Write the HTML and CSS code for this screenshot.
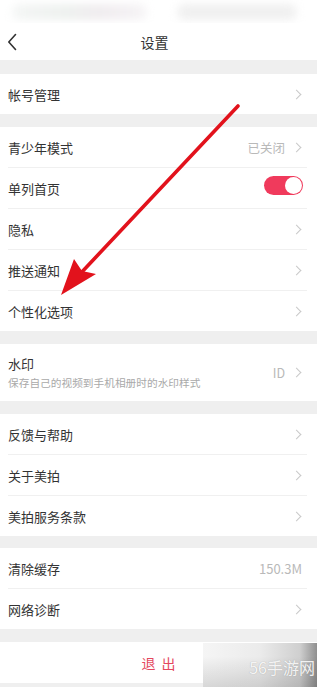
FILE: index.html
```html
<!DOCTYPE html>
<html lang="zh">
<head>
<meta charset="utf-8">
<link rel="stylesheet" href="styles.css">
</head>
<body>
<div class="page">
  <div class="status">
    <div class="blob blob-left"></div>
    <div class="blob blob-right"></div>
  </div>
  <div class="nav">
    <svg class="back" width="10" height="18" viewBox="0 0 10 18"><path d="M8.5 1.5 L1.8 9 L8.5 16.5" fill="none" stroke="#333" stroke-width="1.6" stroke-linecap="round" stroke-linejoin="round"/></svg>
    <div class="title">设置</div>
  </div>

  <div class="group">
    <div class="row"><span class="label">帐号管理</span><span class="chev"></span></div>
  </div>

  <div class="group">
    <div class="row"><span class="label">青少年模式</span><span class="value">已关闭</span><span class="chev"></span></div>
    <div class="row"><span class="label">单列首页</span><span class="toggle"><span class="knob"></span></span></div>
    <div class="row"><span class="label">隐私</span><span class="chev"></span></div>
    <div class="row"><span class="label">推送通知</span><span class="chev"></span></div>
    <div class="row"><span class="label">个性化选项</span><span class="chev"></span></div>
  </div>

  <div class="group">
    <div class="row row-tall">
      <div class="texts">
        <span class="label">水印</span>
        <span class="sub">保存自己的视频到手机相册时的水印样式</span>
      </div>
      <span class="value">ID</span><span class="chev"></span>
    </div>
  </div>

  <div class="group">
    <div class="row"><span class="label">反馈与帮助</span><span class="chev"></span></div>
    <div class="row"><span class="label">关于美拍</span><span class="chev"></span></div>
    <div class="row"><span class="label">美拍服务条款</span><span class="chev"></span></div>
  </div>

  <div class="group group-g12">
    <div class="row"><span class="label">清除缓存</span><span class="value value-end">150.3M</span></div>
    <div class="row"><span class="label">网络诊断</span><span class="chev"></span></div>
  </div>

  <div class="group">
    <div class="logout">退出</div>
  </div>

  <svg class="arrow" width="317" height="687" viewBox="0 0 317 687">
    <line x1="238" y1="106" x2="80" y2="274" stroke="#e2121c" stroke-width="3.6" stroke-linecap="round"/>
    <polygon points="61,295 74,259 82,271 96,274" fill="#e2121c"/>
  </svg>

  <div class="watermark"><span>56手游网</span></div>
</div>
</body>
</html>
```

FILE: styles.css
```css
html, body {
  margin: 0;
  padding: 0;
}
body {
  background: #efefef;
  font-family: "Noto Sans CJK SC", "Noto Sans", sans-serif;
  color: #333;
}
.page {
  position: relative;
  width: 317px;
  height: 687px;
  overflow: hidden;
  background: #efefef;
}
.status {
  height: 23px;
  background: #fff;
  display: flex;
  align-items: center;
  gap: 30px;
  padding: 0 12px;
  overflow: hidden;
}
.blob {
  height: 16px;
  border-radius: 8px;
  filter: blur(4px);
}
.blob-left {
  width: 135px;
  background: linear-gradient(to right, #f4f6f5 0%, #eef1ef 40%, #f0ecef 65%, #f6f4f6 100%);
}
.blob-right {
  width: 120px;
  background: #f0f0f0;
}
.nav {
  height: 37px;
  background: #fff;
  display: flex;
  align-items: center;
  padding-left: 7px;
  position: relative;
}
.back {
  display: block;
}
.title {
  flex: 1;
  text-align: center;
  font-size: 14px;
  margin-right: 25px;
  color: #333;
}
.group {
  background: #fff;
  margin-top: 14px;
}
.group + .group {
  margin-top: 13px;
}
.group-g12 {
  margin-top: 12px !important;
}
.row {
  height: 40px;
  margin: 0 10px 0 8px;
  padding-right: 4px;
  display: flex;
  align-items: center;
  font-size: 13px;
}
.row + .row {
  border-top: 1px solid #f0f0f0;
}
.label {
  flex: 1;
  color: #333;
  font-size: 13px;
}
.value {
  color: #b9b9b9;
  font-size: 12.5px;
  margin-right: 8px;
}
.value-end {
  margin-right: 1px;
  font-size: 13px;
}
.chev {
  width: 6px;
  height: 6px;
  border-top: 1.2px solid #c9c9c9;
  border-right: 1.2px solid #c9c9c9;
  transform: rotate(45deg);
  margin-right: 3px;
}
.toggle {
  width: 39px;
  height: 19px;
  border-radius: 10px;
  background: #f03a5c;
  display: flex;
  align-items: center;
  justify-content: flex-end;
  padding-right: 1px;
  box-sizing: border-box;
  margin-top: -5px;
}
.knob {
  width: 17px;
  height: 17px;
  border-radius: 50%;
  background: #fff;
}
.row-tall {
  height: 57px;
}
.texts {
  flex: 1;
  display: flex;
  flex-direction: column;
  gap: 2px;
}
.texts .label {
  line-height: 18px;
}
.sub {
  font-size: 10.7px;
  color: #a9a9a9;
  line-height: 15px;
}
.logout {
  height: 41px;
  display: flex;
  align-items: center;
  justify-content: center;
  color: #e4485e;
  font-size: 14px;
  letter-spacing: 6px;
  padding-left: 6px;
}
.arrow {
  position: absolute;
  left: 0;
  top: 0;
  pointer-events: none;
}
.watermark {
  position: absolute;
  left: 203px;
  top: 643px;
  width: 114px;
  height: 44px;
  background:
    linear-gradient(to bottom, rgba(0,0,0,0) 30%, rgba(0,0,0,0.12) 100%),
    linear-gradient(to right, #f5f5f5 0%, #ebebeb 50%, #cfcfcf 85%, #8f8f8f 100%);
  display: flex;
  align-items: center;
  justify-content: flex-end;
  padding-top: 4px;
  padding-right: 2px;
  box-sizing: border-box;
}
.watermark span {
  color: rgba(255,255,255,0.9);
  font-size: 16px;
  text-shadow: 0 0 1px rgba(120,120,120,0.6);
}
```
